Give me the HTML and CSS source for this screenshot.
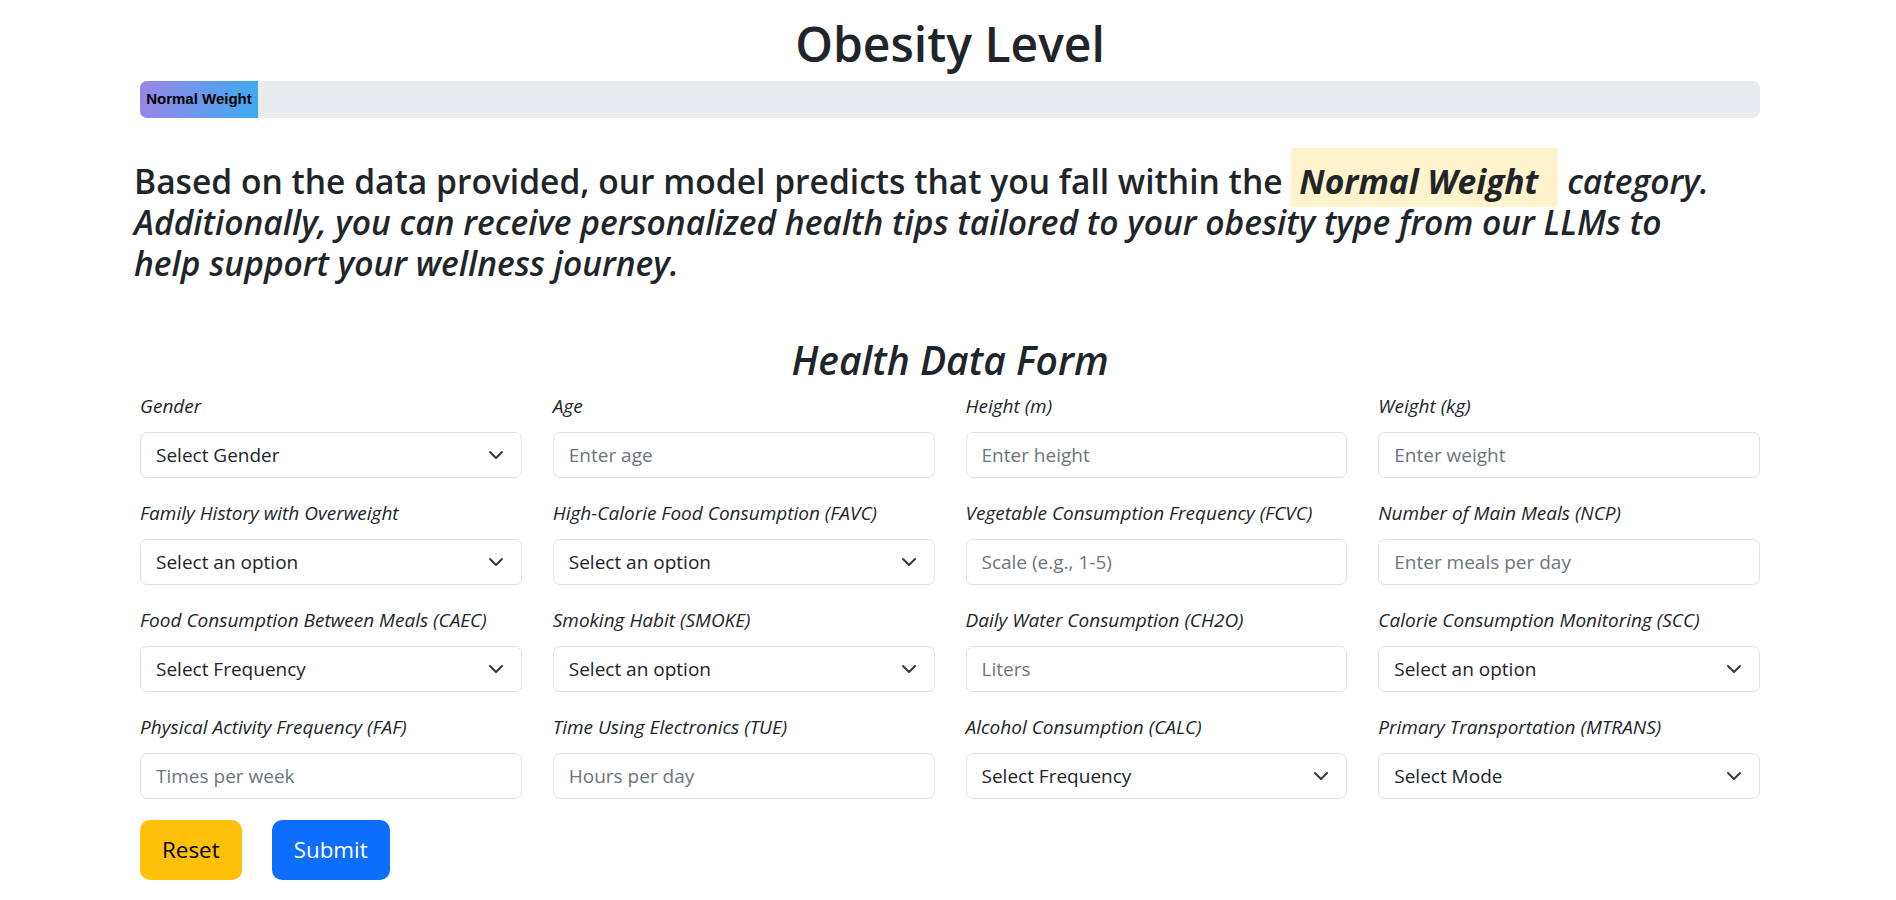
FILE: index.html
```html
<!DOCTYPE html>
<html lang="en">
<head>
<meta charset="utf-8">
<title>Obesity Level</title>
<link rel="stylesheet" href="styles.css">
</head>
<body>
<main class="page">
  <h1 class="title">Obesity Level</h1>
  <div class="progress">
    <div class="progress-bar" style="width: 118px">Normal Weight</div>
  </div>

  <p class="result">Based on the data provided, our model predicts that you fall within the <mark class="hl">Normal Weight</mark> <em>category. Additionally, you can receive personalized health tips tailored to your obesity type from our LLMs to help support your wellness journey.</em></p>

  <h2 class="form-title">Health Data Form</h2>

  <form class="form">
    <div class="grid">
      <div class="field">
        <label class="label">Gender</label>
        <div class="select"><span>Select Gender</span><svg class="chev" viewBox="0 0 14 8"><polyline points="1,1 7,7 13,1"/></svg></div>
      </div>
      <div class="field">
        <label class="label">Age</label>
        <div class="input ph">Enter age</div>
      </div>
      <div class="field">
        <label class="label">Height (m)</label>
        <div class="input ph">Enter height</div>
      </div>
      <div class="field">
        <label class="label">Weight (kg)</label>
        <div class="input ph">Enter weight</div>
      </div>

      <div class="field">
        <label class="label">Family History with Overweight</label>
        <div class="select"><span>Select an option</span><svg class="chev" viewBox="0 0 14 8"><polyline points="1,1 7,7 13,1"/></svg></div>
      </div>
      <div class="field">
        <label class="label">High-Calorie Food Consumption (FAVC)</label>
        <div class="select"><span>Select an option</span><svg class="chev" viewBox="0 0 14 8"><polyline points="1,1 7,7 13,1"/></svg></div>
      </div>
      <div class="field">
        <label class="label">Vegetable Consumption Frequency (FCVC)</label>
        <div class="input ph">Scale (e.g., 1-5)</div>
      </div>
      <div class="field">
        <label class="label">Number of Main Meals (NCP)</label>
        <div class="input ph">Enter meals per day</div>
      </div>

      <div class="field">
        <label class="label">Food Consumption Between Meals (CAEC)</label>
        <div class="select"><span>Select Frequency</span><svg class="chev" viewBox="0 0 14 8"><polyline points="1,1 7,7 13,1"/></svg></div>
      </div>
      <div class="field">
        <label class="label">Smoking Habit (SMOKE)</label>
        <div class="select"><span>Select an option</span><svg class="chev" viewBox="0 0 14 8"><polyline points="1,1 7,7 13,1"/></svg></div>
      </div>
      <div class="field">
        <label class="label">Daily Water Consumption (CH2O)</label>
        <div class="input ph">Liters</div>
      </div>
      <div class="field">
        <label class="label">Calorie Consumption Monitoring (SCC)</label>
        <div class="select"><span>Select an option</span><svg class="chev" viewBox="0 0 14 8"><polyline points="1,1 7,7 13,1"/></svg></div>
      </div>

      <div class="field">
        <label class="label">Physical Activity Frequency (FAF)</label>
        <div class="input ph">Times per week</div>
      </div>
      <div class="field">
        <label class="label">Time Using Electronics (TUE)</label>
        <div class="input ph">Hours per day</div>
      </div>
      <div class="field">
        <label class="label">Alcohol Consumption (CALC)</label>
        <div class="select"><span>Select Frequency</span><svg class="chev" viewBox="0 0 14 8"><polyline points="1,1 7,7 13,1"/></svg></div>
      </div>
      <div class="field">
        <label class="label">Primary Transportation (MTRANS)</label>
        <div class="select"><span>Select Mode</span><svg class="chev" viewBox="0 0 14 8"><polyline points="1,1 7,7 13,1"/></svg></div>
      </div>
    </div>

    <div class="actions">
      <button type="button" class="btn btn-reset">Reset</button>
      <button type="button" class="btn btn-submit">Submit</button>
    </div>
  </form>
</main>
</body>
</html>
```

FILE: styles.css
```css
* { box-sizing: border-box; }

html, body {
  margin: 0;
  padding: 0;
  background: #ffffff;
}

body {
  font-family: "Open Sans", "Noto Sans", sans-serif;
  color: #212529;
  font-size: 19px;
  line-height: 1.5;
}

.page {
  margin: 0 136px 0 140px;
  display: flex;
  flex-direction: column;
}

.title {
  margin: 15px 0 0;
  font-size: 48px;
  line-height: 57.6px;
  font-weight: 600;
  text-align: center;
}

.progress {
  margin-top: 8px;
  height: 37px;
  background: #e9ecef;
  border-radius: 7px;
  overflow: hidden;
  display: flex;
}

.progress-bar {
  background: linear-gradient(to right, #9886e8, #3eaaee);
  color: #000;
  font-family: "Liberation Sans", Arial, sans-serif;
  font-weight: 700;
  font-size: 15px;
  display: flex;
  align-items: center;
  justify-content: center;
  white-space: nowrap;
}

.result {
  margin: 43px 44px 0 -6px;
  font-size: 33.6px;
  line-height: 41px;
  font-weight: 600;
}

.result em {
  font-style: italic;
}

.hl {
  background: #fff3cd;
  color: #212529;
  font-weight: 700;
  font-style: italic;
  padding: 9.6px 20px 3.7px 8px;
}

.form-title {
  margin: 53px 0 0;
  font-size: 39px;
  line-height: 46.8px;
  font-weight: 600;
  font-style: italic;
  text-align: center;
}

.form {
  margin-top: 10px;
}

.grid {
  display: grid;
  grid-template-columns: repeat(4, 1fr);
  column-gap: 31px;
  row-gap: 22.5px;
}

.field {
  display: flex;
  flex-direction: column;
}

.label {
  font-size: 19px;
  line-height: 27px;
  font-style: italic;
  margin-bottom: 11.5px;
  white-space: nowrap;
}

.input,
.select {
  height: 46px;
  border: 1px solid #dee2e6;
  border-radius: 7px;
  padding: 0 15px;
  font-size: 19px;
  display: flex;
  align-items: center;
  background: #fff;
}

.ph {
  color: #6c757d;
}

.select {
  position: relative;
  color: #212529;
}

.chev {
  position: absolute;
  right: 18px;
  top: 50%;
  width: 14px;
  height: 8px;
  margin-top: -3.5px;
  fill: none;
  stroke: #343a40;
  stroke-width: 2;
  stroke-linecap: round;
  stroke-linejoin: round;
  overflow: visible;
}

.actions {
  margin-top: 21px;
  display: flex;
  gap: 30px;
}

.btn {
  height: 60px;
  padding: 0 21px;
  border: 1px solid transparent;
  border-radius: 10px;
  font-family: inherit;
  font-size: 22.4px;
  line-height: 1;
  cursor: pointer;
}

.btn-reset {
  background: #ffc107;
  color: #000;
}

.btn-submit {
  background: #0d6efd;
  color: #fff;
}
```
